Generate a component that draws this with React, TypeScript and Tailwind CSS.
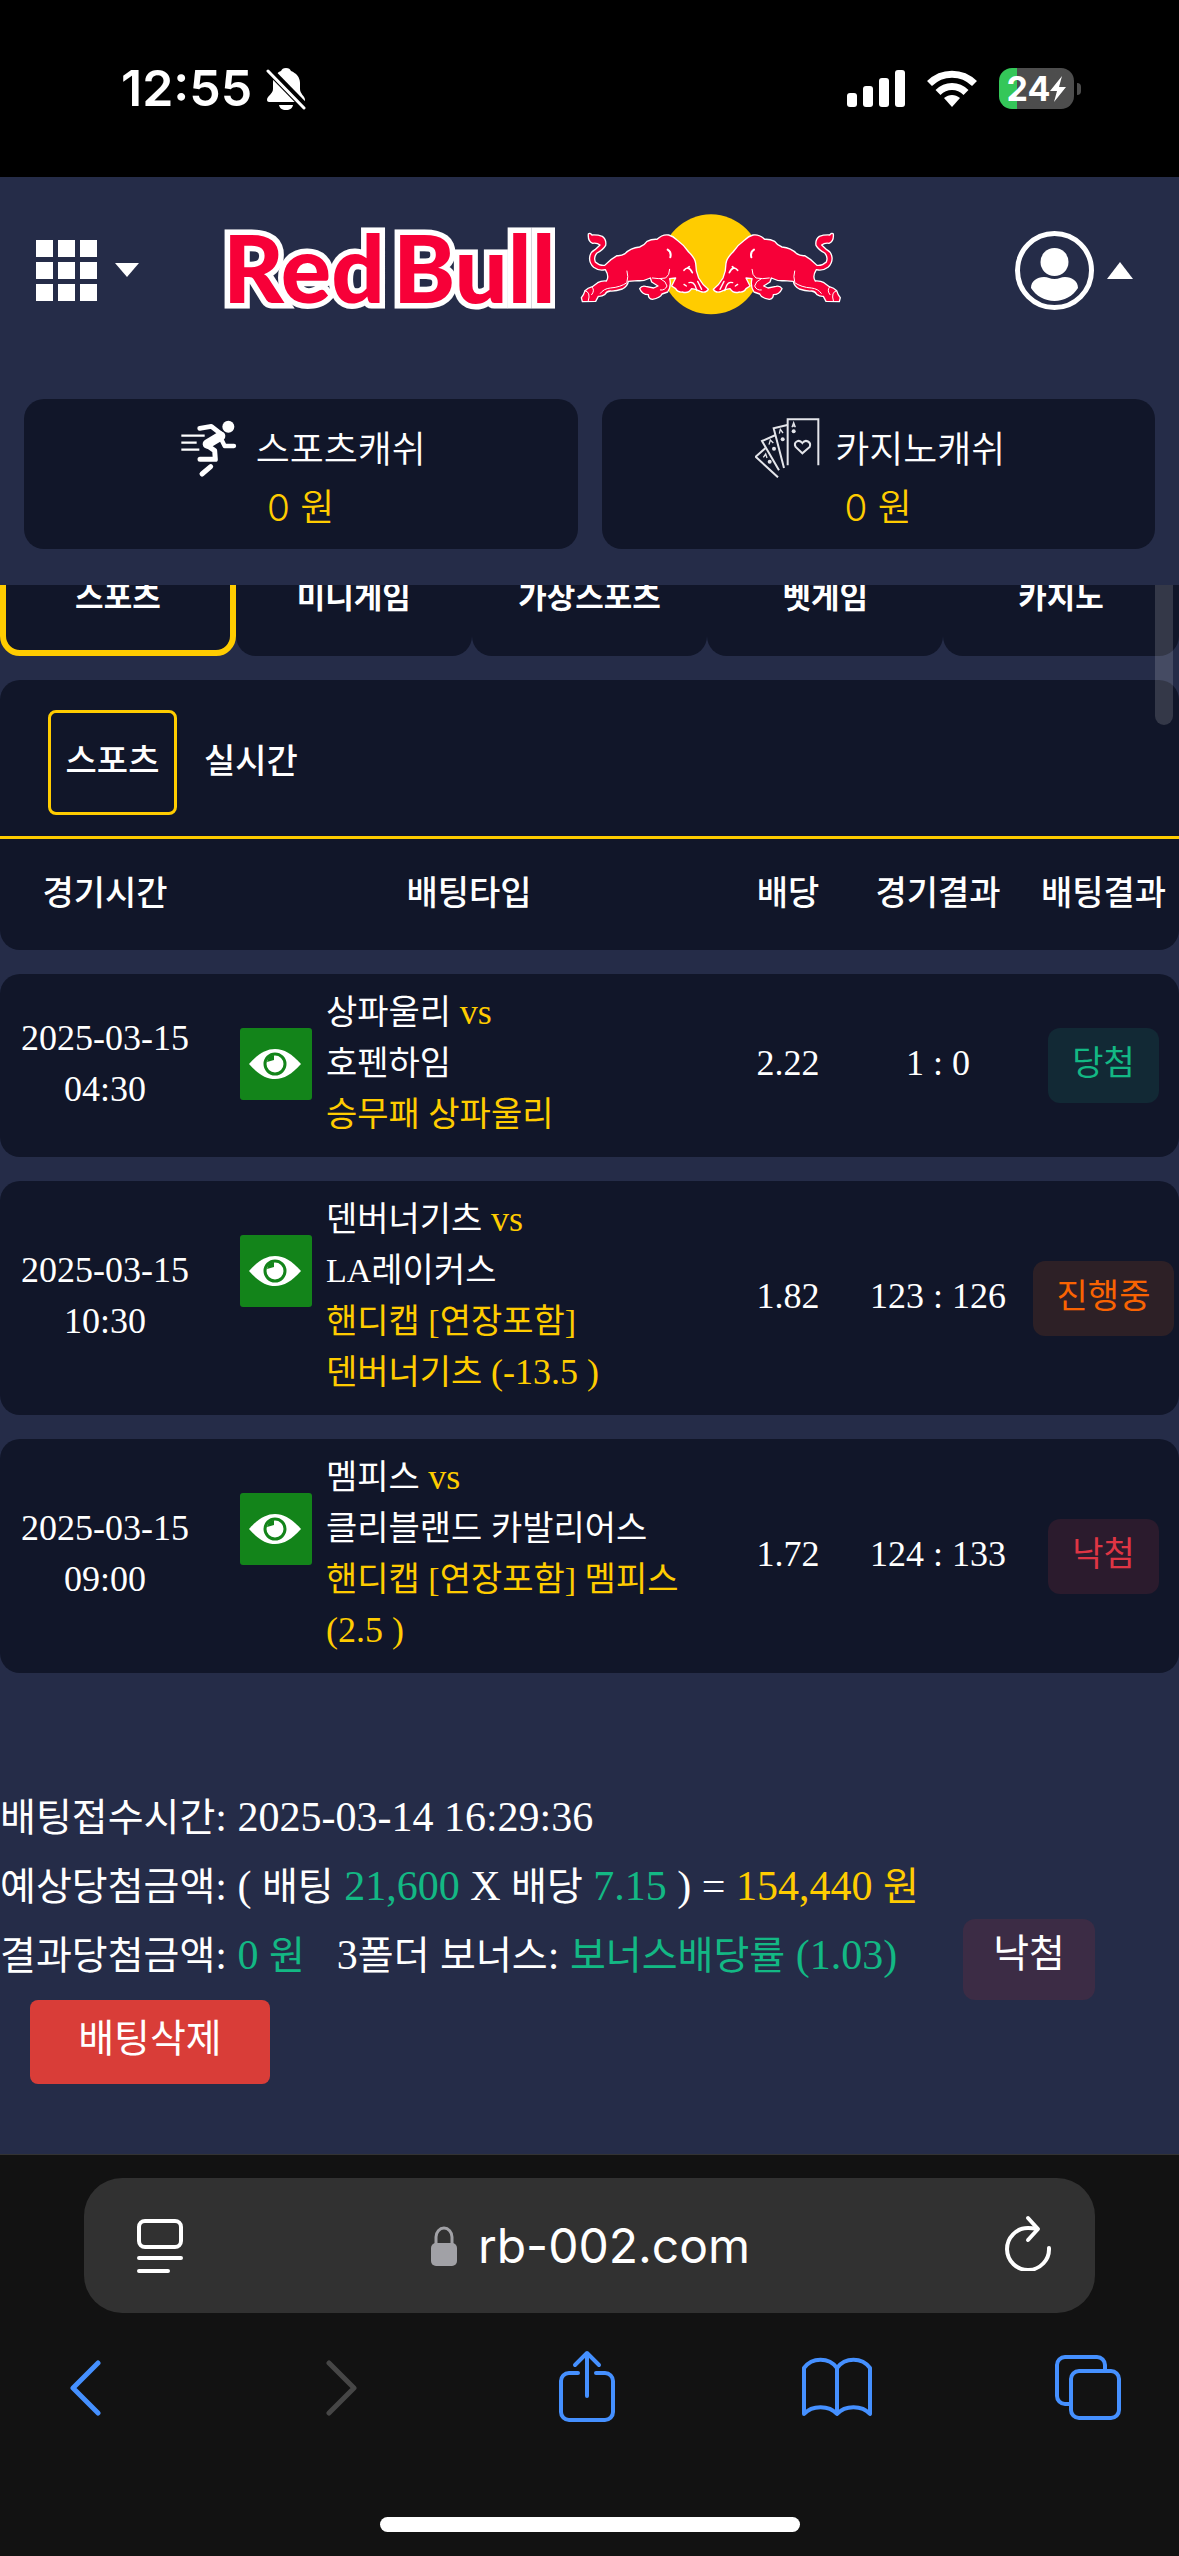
import type { ReactNode } from "react"

const serif = "font-['Liberation_Serif','Noto_Sans_CJK_KR',serif]"

const sports = ["스포츠", "미니게임", "가상스포츠", "벳게임", "카지노"]

type Status = "win" | "live" | "lose"

const statusStyle: Record<Status, string> = {
  win: "bg-[#122935] text-[#13b884]",
  live: "bg-[#2d2026] text-[#f96302]",
  lose: "bg-[#2b1b2d] text-[#df3544]",
}

type Bet = {
  date: string
  time: string
  home: string
  away: string
  pick: string[]
  handicap?: string
  odds: string
  score: string
  status: Status
  label: string
}

const bets: Bet[] = [
  {
    date: "2025-03-15",
    time: "04:30",
    home: "상파울리",
    away: "호펜하임",
    pick: ["승무패 상파울리"],
    odds: "2.22",
    score: "1 : 0",
    status: "win",
    label: "당첨",
  },
  {
    date: "2025-03-15",
    time: "10:30",
    home: "덴버너기츠",
    away: "LA레이커스",
    pick: ["핸디캡 [연장포함]", "덴버너기츠 "],
    handicap: "(-13.5 )",
    odds: "1.82",
    score: "123 : 126",
    status: "live",
    label: "진행중",
  },
  {
    date: "2025-03-15",
    time: "09:00",
    home: "멤피스",
    away: "클리블랜드 카발리어스",
    pick: ["핸디캡 [연장포함] 멤피스", ""],
    handicap: "(2.5 )",
    odds: "1.72",
    score: "124 : 133",
    status: "lose",
    label: "낙첨",
  },
]

function StatusBar() {
  return (
    <div className="flex h-[177px] items-center justify-between bg-black pr-[98px] pl-[121px] text-white">
      <div className="flex items-center gap-3.5">
        <span className="font-['Inter',sans-serif] text-[50px] font-semibold">12:55</span>
        <svg className="h-11 w-10" viewBox="0 0 40 44" fill="none">
          <path
            d="M20 1c-3 0-4 1-5 3C10 6 7 10 7 16v6c0 5-6 7-6 11 0 1 1 2 2 2h34c1 0 2-1 2-2 0-4-5-6-5-11v-6c0-6-4-10-9-12-1-2-2-3-5-3z"
            fill="#fff"
          />
          <path d="M13 38h14c-.5 3-3 5-7 5s-6.500-2-7-5z" fill="#fff" />
          <path d="M3 3l37 38" stroke="#000" strokeWidth="8" />
          <path d="M2 4l36 37" stroke="#fff" strokeWidth="3" strokeLinecap="round" />
        </svg>
      </div>
      <div className="flex items-center gap-[22px]">
        <svg className="h-[37px] w-[58px]" viewBox="0 0 58 37" fill="#fff">
          <rect x="0" y="23" width="10" height="14" rx="3" />
          <rect x="16" y="16" width="10" height="21" rx="3" />
          <rect x="32" y="8" width="10" height="29" rx="3" />
          <rect x="48" y="0" width="10" height="37" rx="3" />
        </svg>
        <svg className="h-[37px] w-[50px]" viewBox="0 0 50 37" fill="none" stroke="#fff" strokeWidth="7">
          <path d="M2.500 13.500C15 1 35 1 47.500 13.500" />
          <path d="M11 22.500c8-8 20-8 28 0" />
          <path d="M25 37l-8-9c5-4 11-4 16 0z" fill="#fff" stroke="none" />
        </svg>
        <div className="flex items-center gap-[3px]">
          <div className="flex h-[41px] w-[75px] items-center justify-center rounded-[13px] bg-linear-to-r from-[#34c759] from-24% to-[#4d4d4d] to-24%">
            <span className="font-['Inter',sans-serif] text-[34px] leading-[41px] font-bold">24</span>
            <svg className="h-[26px] w-4" viewBox="0 0 16 26" fill="#fff">
              <path d="M12 0L0 15h7L4 26l12-15H9z" />
            </svg>
          </div>
          <span className="h-3 w-1 rounded-r-full bg-[#4d4d4d]" />
        </div>
      </div>
    </div>
  )
}

const bullBody =
  "M84 134Q88 129 95 137Q112 136 126 141Q139 150 136 168Q128 182 110 191Q99 203 105 218Q118 230 133 228Q150 210 170 199Q184 200 194 193Q210 176 238 173Q252 168 260 156Q274 149 290 150Q306 134 325 137Q338 140 350 152Q370 166 385 188Q404 206 406 222Q406 246 415 266Q426 286 444 300Q436 313 420 306Q404 298 394 298Q384 314 366 308Q352 310 346 298L334 290L346 266L328 268Q334 290 322 308L305 314Q300 326 276 330Q264 328 264 316Q246 316 238 298Q244 288 256 291L280 296L293 290L274 278L270 266Q250 276 232 274L204 276Q202 290 186 299Q166 306 150 305Q138 306 134 315Q124 322 114 321L106 336L66 337L63 325Q70 318 74 304Q82 296 96 292L112 280Q122 274 138 275Q148 262 135 241Q116 246 100 234Q86 220 88 204Q90 188 104 181L119 167Q110 160 97 162Q82 156 84 134Z"

function Bull() {
  return (
    <g stroke="#fff" strokeWidth="4" strokeLinejoin="round" strokeLinecap="round" fill="none">
      <path d={bullBody} fill="#f70038" />
      <path
        d="M200 245Q205 262 200 278M328 240Q328 258 316 266Q296 270 276 266M300 268Q318 276 320 290Q314 304 300 302"
        strokeWidth="3"
      />
      <path d="M322 181Q334 188 330 204" strokeWidth="6" />
      <path d="M371 243Q384 226 396 250M382 236L387 232" strokeWidth="5" />
      <path d="M371 285L378 290M386 280Q398 276 404 288L410 304M412 276L424 300" />
      <path
        d="M200 280Q180 294 150 296Q130 298 120 312M74 304Q92 308 84 334M96 294Q104 304 94 316"
        strokeWidth="3"
      />
    </g>
  )
}

function Logo() {
  return (
    <a href="#" aria-label="Red Bull" className="mr-auto ml-[83px] flex h-[104px] items-center gap-6">
      <svg className="h-[140px] w-[333px]" viewBox="0 0 333 140">
        <g
          className="font-['Lato',sans-serif] text-[94px] font-black"
          fill="#f70038"
          stroke="#fff"
          strokeWidth="11"
          paintOrder="stroke"
        >
          <text x="1" y="109">
            Red
          </text>
          <text x="171" y="109">
            Bull
          </text>
        </g>
      </svg>
      <svg className="h-[104px] w-[264px]" viewBox="56 68 792 312">
        <circle cx="452" cy="225" r="150" fill="#ffcc00" />
        <Bull />
        <g transform="translate(903 0) scale(-1 1)">
          <Bull />
        </g>
      </svg>
    </a>
  )
}

function Header() {
  return (
    <header className="bg-[#252c48] px-6 pb-9">
      <div className="flex h-[222px] items-start pt-[35px] pr-[22px] pl-3">
        <button type="button" aria-label="메뉴" className="flex h-[116px] items-center gap-[18px]">
          <svg className="size-[61px]" viewBox="0 0 61 61" fill="#fff">
            {[0, 22, 44].map((y) =>
              [0, 22, 44].map((x) => <rect key={`${x}-${y}`} x={x} y={y} width="17" height="17" />)
            )}
          </svg>
          <svg className="h-[14px] w-6" viewBox="0 0 24 14" fill="#fff">
            <path d="M0 0h24L12 14z" />
          </svg>
        </button>
        <Logo />
        <button type="button" aria-label="내 정보" className="flex h-[116px] items-center gap-[13px]">
          <svg className="size-[79px]" viewBox="0 0 79 79" fill="#fff">
            <circle cx="39.500" cy="39.500" r="37" fill="none" stroke="#fff" strokeWidth="5" />
            <circle cx="39.500" cy="31" r="14" />
            <path d="M16 57c0-7 6-11 13-11 4 0 6 2 10.500 2s6.500-2 10.500-2c7 0 13 4 13 11-5 8-14 13-23.500 13S21 65 16 57z" />
          </svg>
          <svg className="h-[17px] w-[26px]" viewBox="0 0 26 17" fill="#fff">
            <path d="M0 17h26L13 0z" />
          </svg>
        </button>
      </div>
      <div className="grid grid-cols-2 gap-6">
        <Cash title="스포츠캐쉬" icon={<RunnerIcon />} />
        <Cash title="카지노캐쉬" icon={<CardsIcon />} />
      </div>
    </header>
  )
}

function Cash({ title, icon }: { title: string; icon: ReactNode }) {
  return (
    <div className="flex h-[150px] flex-col items-center rounded-[20px] bg-[#111629] pt-4 font-['Inter','Noto_Sans_CJK_KR',sans-serif] text-[37px] font-[350] text-white">
      <div className="flex h-[65px] items-center gap-[18px] pl-1 leading-[60px]">
        {icon}
        <span className="pt-1">{title}</span>
      </div>
      <div className="leading-[56px] text-[#ffcc00]">0 원</div>
    </div>
  )
}

function RunnerIcon() {
  return (
    <svg
      className="h-[60px] w-[58px]"
      viewBox="0 0 174 180"
      fill="none"
      stroke="#fff"
      strokeLinecap="round"
      strokeLinejoin="round"
    >
      <circle cx="145" cy="26" r="18" fill="#fff" stroke="none" />
      <path d="M59 31L94 25L121 46" strokeWidth="14" />
      <path d="M122 54L82 78" strokeWidth="28" />
      <path d="M122 60L134 84H162" strokeWidth="13" />
      <path d="M78 80L104 98L106 124H60" strokeWidth="15" />
      <path d="M92 146L66 168" strokeWidth="15" />
      <path d="M4 53H74M4 74H50M4 95H58" strokeWidth="7" strokeLinecap="butt" />
    </svg>
  )
}

function CardsIcon() {
  return (
    <svg className="-mr-1 h-[60px] w-[66px]" viewBox="0 0 198 180" fill="none" stroke="#e4e5ea" strokeWidth="6">
      <path d="M98 142V4H190V142" />
      <path d="M97 21L56 31L87 150" />
      <path d="M62 51L21 69L72 157" />
      <path d="M32 90L2 116L69 178" />
      <path d="M142 106L122 87C114 72 132 62 142 75C152 62 170 72 164 87Z" />
      <path
        d="M111 28L116 14L121 28M113 24H119M73 47L76 34L84 45M42 80L46 66L55 75M25 118L32 108L36 120"
        strokeWidth="4"
      />
      <g fill="#e4e5ea" stroke="none">
        <circle cx="116" cy="40" r="6" />
        <circle cx="83" cy="64" r="6" />
        <circle cx="57" cy="92" r="6" />
        <circle cx="44" cy="131" r="6" />
      </g>
    </svg>
  )
}

// scrolled partly under the header, so only the lower part of each tab shows
function SportTabs() {
  return (
    <nav className="grid h-[71px] grid-cols-5 content-end overflow-hidden">
      {sports.map((name, i) => (
        <button
          key={name}
          type="button"
          className={`h-[120px] rounded-[20px] bg-[#111629] pb-1 text-[31px] leading-none font-bold text-white ${
            i === 0 ? "border-6 border-[#ffcc00]" : ""
          }`}
        >
          {name}
        </button>
      ))}
    </nav>
  )
}

function EyeButton() {
  return (
    <button
      type="button"
      aria-label="경기 보기"
      className="mt-[41px] size-[72px] shrink-0 rounded-[3px] bg-[#13841a]"
    >
      <svg viewBox="0 0 72 72">
        <path d="M9 36C18 26 26 21 35 21S52 26 61 36C52 46 44 51 35 51S18 46 9 36z" fill="#fff" />
        <circle cx="35" cy="36" r="10" fill="#fff" stroke="#13841a" strokeWidth="3" />
        <path d="M27 34a8 8 0 0 1 7-7v5z" fill="#13841a" />
      </svg>
    </button>
  )
}

const columns = "grid grid-cols-[210fr_518fr_120fr_180fr_151fr]"

function BetTable() {
  return (
    <table className="block text-white">
      <thead className="block">
        <tr
          className={`${columns} h-[111px] items-center rounded-b-[20px] bg-[#111629] pb-2 font-['Noto_Sans_CJK_KR',sans-serif] text-[34px] whitespace-nowrap`}
        >
          {["경기시간", "배팅타입", "배당", "경기결과", "배팅결과"].map((name) => (
            <th key={name} className="font-medium">
              {name}
            </th>
          ))}
        </tr>
      </thead>
      <tbody className={`flex flex-col gap-6 pt-6 text-center text-[34px] leading-[51px] ${serif}`}>
        {bets.map((bet) => (
          <tr key={bet.home} className={`${columns} items-center rounded-[20px] bg-[#111629] pt-[13px] pb-[17px]`}>
            <td className="text-[36px]">
              {bet.date}
              <br />
              {bet.time}
            </td>
            <td className="flex items-start gap-[14px] self-start pl-[30px] text-left whitespace-nowrap">
              <EyeButton />
              <div>
                <div className="h-[51px]">
                  {bet.home} <span className="text-[36px] text-[#ffcc00]">vs</span>
                </div>
                <div className="h-[51px]">{bet.away}</div>
                {bet.pick.map((line, i) => (
                  <div key={line} className="h-[51px] text-[#ffcc00]">
                    {line}
                    {i === 1 && <span className="text-[36px]">{bet.handicap}</span>}
                  </div>
                ))}
              </div>
            </td>
            <td className="text-[36px]">{bet.odds}</td>
            <td className="text-[36px] whitespace-nowrap">{bet.score}</td>
            <td className="flex justify-center pt-1">
              <span
                className={`h-[75px] rounded-xl px-6 leading-[71px] whitespace-nowrap ${statusStyle[bet.status]}`}
              >
                {bet.label}
              </span>
            </td>
          </tr>
        ))}
      </tbody>
    </table>
  )
}

// Hangul runs a little larger than the serif digits at the same size
function Ko({ children }: { children: string }) {
  return <span className="text-[39px]">{children}</span>
}

function Summary() {
  return (
    <section className={`pt-[110px] pb-[70px] text-[42px] leading-[69px] whitespace-nowrap text-white ${serif}`}>
      <p className="h-[69px]">
        <Ko>배팅접수시간</Ko>: 2025-03-14 16:29:36
      </p>
      <p className="h-[69px]">
        <Ko>예상당첨금액</Ko>: ( <Ko>배팅</Ko> <span className="text-[#13b884]">21,600</span> X <Ko>배당</Ko>{" "}
        <span className="text-[#13b884]">7.15</span> ) ={" "}
        <span className="text-[#ffcc00]">
          154,440 <Ko>원</Ko>
        </span>
      </p>
      <div className="flex h-[79px]">
        <p>
          <Ko>결과당첨금액</Ko>:{" "}
          <span className="text-[#13b884]">
            0 <Ko>원</Ko>
          </span>
        </p>
        <p className="pl-8">
          3<Ko>폴더</Ko> <Ko>보너스</Ko>:{" "}
          <span className="text-[#13b884]">
            <Ko>보너스배당률</Ko> (1.03)
          </span>
        </p>
        <span className="-mt-[2px] ml-[66px] h-[81px] rounded-xl bg-[#3c2c45] px-[30px]">
          <Ko>낙첨</Ko>
        </span>
      </div>
      <button type="button" className="ml-[30px] block h-[84px] w-60 rounded-lg bg-[#d93d38] pb-2">
        <Ko>배팅삭제</Ko>
      </button>
    </section>
  )
}

const toolbarButton = "flex w-[72px] justify-center"

function BrowserBar() {
  return (
    <footer className="border-t border-[#333] bg-[#121212] pt-[23px] pb-6">
      <div className="mx-[84px] flex h-[135px] items-center justify-between rounded-[38px] bg-[#313131] pr-[43px] pl-[52px]">
        <button type="button" aria-label="페이지 메뉴">
          <svg className="h-14 w-12" viewBox="0 0 48 56" fill="none" stroke="#fff" strokeWidth="4" strokeLinecap="round">
            <rect x="3" y="3" width="42" height="26" rx="6" />
            <path d="M3 40h42M3 53h29" />
          </svg>
        </button>
        <div className="flex items-center gap-5 pr-2 font-['Inter',sans-serif] text-[48px] text-white">
          <svg className="h-10 w-7" viewBox="0 0 28 40">
            <path d="M6 18V11a8 9 0 0 1 16 0v7" fill="none" stroke="#a1a1a6" strokeWidth="3" />
            <rect x="1" y="17" width="26" height="23" rx="5" fill="#a1a1a6" />
          </svg>
          rb-002.com
        </div>
        <button type="button" aria-label="새로고침" className="pb-1.5">
          <svg
            className="h-14 w-12"
            viewBox="0 0 48 56"
            fill="none"
            stroke="#fff"
            strokeWidth="4"
            strokeLinecap="round"
            strokeLinejoin="round"
          >
            <path d="M45 33a21 21 0 1 1-21-20q5 0 9 1" />
            <path d="M24 3l10 11-10 11" />
          </svg>
        </button>
      </div>
      <nav className="flex items-center justify-between pt-[37px] pr-[55px] pl-[49px]">
        <button type="button" aria-label="뒤로" className={toolbarButton}>
          <svg
            className="h-[76px] w-8"
            viewBox="0 0 32 76"
            fill="none"
            stroke="#4590ff"
            strokeWidth="5"
            strokeLinecap="round"
            strokeLinejoin="round"
          >
            <path d="M29 13L4 38l25 25" />
          </svg>
        </button>
        <button type="button" aria-label="앞으로" className={`${toolbarButton} pl-3`}>
          <svg
            className="h-[76px] w-8"
            viewBox="0 0 32 76"
            fill="none"
            stroke="#464646"
            strokeWidth="5"
            strokeLinecap="round"
            strokeLinejoin="round"
          >
            <path d="M3 13l25 25L3 63" />
          </svg>
        </button>
        <button type="button" aria-label="공유" className={toolbarButton}>
          <svg
            className="h-[76px] w-[58px]"
            viewBox="0 0 58 76"
            fill="none"
            stroke="#4590ff"
            strokeWidth="4"
            strokeLinecap="round"
            strokeLinejoin="round"
          >
            <path d="M20 23h-9a8 8 0 0 0-8 8v31a8 8 0 0 0 8 8h36a8 8 0 0 0 8-8V31a8 8 0 0 0-8-8h-9" />
            <path d="M29 46V3M17 15L29 3l12 12" />
          </svg>
        </button>
        <button type="button" aria-label="책갈피" className={toolbarButton}>
          <svg
            className="h-[76px] w-[72px]"
            viewBox="0 0 72 76"
            fill="none"
            stroke="#4590ff"
            strokeWidth="4"
            strokeLinejoin="round"
          >
            <path d="M36 18C28 7 11 7 3 18v46c8-9 25-9 33 0 8-9 25-9 33 0V18C61 7 44 7 36 18zM36 18v46" />
          </svg>
        </button>
        <button type="button" aria-label="탭" className={toolbarButton}>
          <svg className="h-[76px] w-[68px]" viewBox="0 0 68 76" fill="none" stroke="#4590ff" strokeWidth="4">
            <rect x="17" y="21" width="48" height="47" rx="8" />
            <path d="M17 54h-6a8 8 0 0 1-8-8V15a8 8 0 0 1 8-8h32a8 8 0 0 1 8 8v6" />
          </svg>
        </button>
      </nav>
      <div className="mx-auto mt-[91px] h-[15px] w-[420px] rounded-full bg-white" />
    </footer>
  )
}

export default function App() {
  return (
    <div className="w-full bg-[#252c48] font-['Noto_Sans_CJK_KR',sans-serif]">
      <StatusBar />
      <Header />
      <main className="relative">
        <SportTabs />
        <div className="mt-6 flex h-[159px] items-center gap-[11px] rounded-t-[20px] border-b-3 border-[#ffcc00] bg-[#111629] pt-2 pl-12 text-[34px] font-medium text-white">
          <button type="button" className="h-[105px] w-[129px] rounded-lg border-3 border-[#ffcc00] pb-2">
            스포츠
          </button>
          <button type="button" className="px-4 pb-2">
            실시간
          </button>
        </div>
        <BetTable />
        <Summary />
        {/* scroll thumb */}
        <span className="absolute top-0 right-1.5 h-[140px] w-[18px] rounded-b-full bg-white/15" />
      </main>
      <BrowserBar />
    </div>
  )
}
